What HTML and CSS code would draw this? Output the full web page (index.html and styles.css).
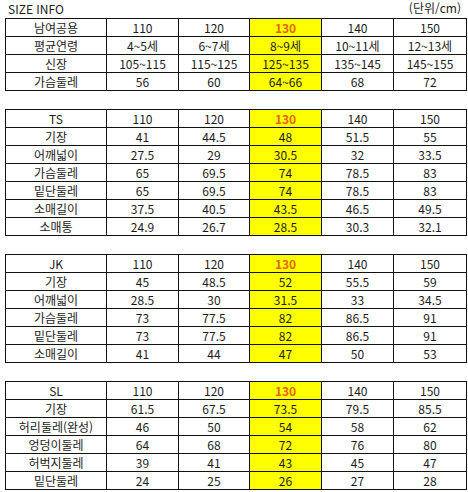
FILE: index.html
```html
<!DOCTYPE html>
<html lang="ko">
<head>
<meta charset="utf-8">
<link rel="stylesheet" href="styles.css">
</head>
<body>
<div class="page">
  <div class="head">
    <span class="title">SIZE INFO</span>
    <span class="unit">(단위/cm)</span>
  </div>

  <table class="size">
    <colgroup><col class="c0"><col class="c1"><col class="c2"><col class="c3"><col class="c4"><col class="c5"></colgroup>
    <tr><td>남여공용</td><td>110</td><td>120</td><td class="hl hd">130</td><td>140</td><td>150</td></tr>
    <tr><td>평균연령</td><td>4~5세</td><td>6~7세</td><td class="hl">8~9세</td><td>10~11세</td><td>12~13세</td></tr>
    <tr><td>신장</td><td>105~115</td><td>115~125</td><td class="hl">125~135</td><td>135~145</td><td>145~155</td></tr>
    <tr><td>가슴둘레</td><td>56</td><td>60</td><td class="hl">64~66</td><td>68</td><td>72</td></tr>
  </table>

  <table class="size">
    <colgroup><col class="c0"><col class="c1"><col class="c2"><col class="c3"><col class="c4"><col class="c5"></colgroup>
    <tr><td>TS</td><td>110</td><td>120</td><td class="hl hd">130</td><td>140</td><td>150</td></tr>
    <tr><td>기장</td><td>41</td><td>44.5</td><td class="hl">48</td><td>51.5</td><td>55</td></tr>
    <tr><td>어깨넓이</td><td>27.5</td><td>29</td><td class="hl">30.5</td><td>32</td><td>33.5</td></tr>
    <tr><td>가슴둘레</td><td>65</td><td>69.5</td><td class="hl">74</td><td>78.5</td><td>83</td></tr>
    <tr><td>밑단둘레</td><td>65</td><td>69.5</td><td class="hl">74</td><td>78.5</td><td>83</td></tr>
    <tr><td>소매길이</td><td>37.5</td><td>40.5</td><td class="hl">43.5</td><td>46.5</td><td>49.5</td></tr>
    <tr><td>소매통</td><td>24.9</td><td>26.7</td><td class="hl">28.5</td><td>30.3</td><td>32.1</td></tr>
  </table>

  <table class="size">
    <colgroup><col class="c0"><col class="c1"><col class="c2"><col class="c3"><col class="c4"><col class="c5"></colgroup>
    <tr><td>JK</td><td>110</td><td>120</td><td class="hl hd">130</td><td>140</td><td>150</td></tr>
    <tr><td>기장</td><td>45</td><td>48.5</td><td class="hl">52</td><td>55.5</td><td>59</td></tr>
    <tr><td>어깨넓이</td><td>28.5</td><td>30</td><td class="hl">31.5</td><td>33</td><td>34.5</td></tr>
    <tr><td>가슴둘레</td><td>73</td><td>77.5</td><td class="hl">82</td><td>86.5</td><td>91</td></tr>
    <tr><td>밑단둘레</td><td>73</td><td>77.5</td><td class="hl">82</td><td>86.5</td><td>91</td></tr>
    <tr><td>소매길이</td><td>41</td><td>44</td><td class="hl">47</td><td>50</td><td>53</td></tr>
  </table>

  <table class="size">
    <colgroup><col class="c0"><col class="c1"><col class="c2"><col class="c3"><col class="c4"><col class="c5"></colgroup>
    <tr><td>SL</td><td>110</td><td>120</td><td class="hl hd">130</td><td>140</td><td>150</td></tr>
    <tr><td>기장</td><td>61.5</td><td>67.5</td><td class="hl">73.5</td><td>79.5</td><td>85.5</td></tr>
    <tr><td>허리둘레(완성)</td><td>46</td><td>50</td><td class="hl">54</td><td>58</td><td>62</td></tr>
    <tr><td>엉덩이둘레</td><td>64</td><td>68</td><td class="hl">72</td><td>76</td><td>80</td></tr>
    <tr><td>허벅지둘레</td><td>39</td><td>41</td><td class="hl">43</td><td>45</td><td>47</td></tr>
    <tr><td>밑단둘레</td><td>24</td><td>25</td><td class="hl">26</td><td>27</td><td>28</td></tr>
  </table>
</div>
</body>
</html>
```
FILE: styles.css
```css
html, body {
  margin: 0;
  padding: 0;
  background: #ffffff;
}

body {
  font-family: "Noto Sans CJK KR", "Noto Sans", sans-serif;
  font-size: 12px;
  color: #1c1c1c;
}

.page {
  width: 468px;
  padding: 0 2px 0 5px;
  box-sizing: border-box;
}

.head {
  display: flex;
  justify-content: space-between;
  align-items: center;
  height: 18px;
  line-height: 14px;
  padding: 0 5px 0 3px;
}

.title,
.unit {
  font-size: 12px;
  color: #222;
}

.unit {
  margin-top: -2px;
}

.size {
  border-collapse: collapse;
  table-layout: fixed;
  width: 461px;
  margin-bottom: 18px;
}

.c0 { width: 101px; }
.c1 { width: 72px; }
.c2 { width: 71px; }
.c3 { width: 72px; }
.c4 { width: 72px; }
.c5 { width: 73px; }

.size td {
  border: 1px solid #111;
  height: 17px;
  padding: 0;
  line-height: 16px;
  text-align: center;
  white-space: nowrap;
  overflow: hidden;
}

.size td.hl {
  background: #ffff00;
}

.size td.hd {
  color: #e2680c;
  font-weight: bold;
}
```
